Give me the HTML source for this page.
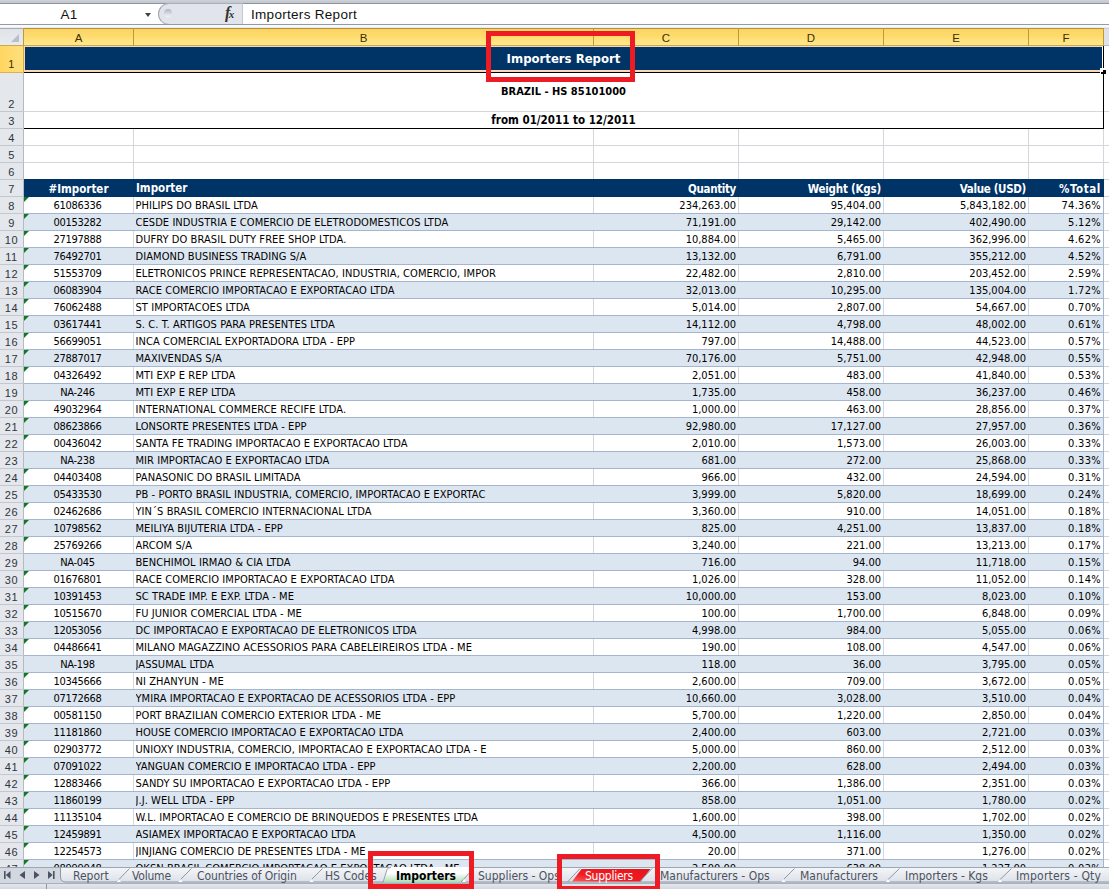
<!DOCTYPE html>
<html lang="en"><head><meta charset="utf-8"><title>Importers Report</title>
<style>
*{box-sizing:border-box;margin:0;padding:0}
html,body{width:1109px;height:889px;background:#fff;overflow:hidden}
body{font-family:"DejaVu Sans Condensed","DejaVu Sans","Liberation Sans",sans-serif;font-size:11px;color:#000}
#app{position:relative;width:1109px;height:889px;overflow:hidden;background:#fff}
#app div,#app span,#app i,#app svg{position:absolute}
/* top chrome */
.topstrip{left:0;top:0;width:1109px;height:4px;background:linear-gradient(#cfd3d9,#c0c5cc 74%,#8f959f 75%)}
.fbar{left:0;top:4px;width:1109px;height:20px;background:#fff}
.fline{left:0;top:24px;width:1109px;height:4px;background:linear-gradient(#959ba5 0,#959ba5 25%,#f4f5f7 26%,#fff 50%,#e3e6eb 100%)}
.namebox{left:0;top:4px;width:138px;height:20px;text-align:center;letter-spacing:0.3px;font:13.5px/21px "Liberation Sans",sans-serif;color:#111}
.ddarrow{left:145px;top:13px;width:0;height:0;border-left:3.5px solid transparent;border-right:3.5px solid transparent;border-top:4px solid #444}
.capsule{left:158px;top:3px;width:85px;height:22px;border:1px solid #9aa2ae;border-right:1px solid #c2c8d1;border-top-color:#a9b0ba;border-bottom-color:#b0b6bf;border-radius:11px 0 0 11px;background:#e1e5eb}
.knob{left:164px;top:9px;width:8px;height:8px;border-radius:50%;background:linear-gradient(#aeb5bf,#f4f6f8)}
.fx{left:225px;top:3px;width:16px;height:20px;font:italic bold 16px/20px "Liberation Serif",serif;color:#333;letter-spacing:-1.5px}
.fx small{font-size:11px;position:static}
.ftext{left:251px;top:4px;height:20px;letter-spacing:0.3px;font:13.5px/21px "Liberation Sans",sans-serif;color:#111;white-space:nowrap}
/* column headers */
.corner{left:0;top:28px;width:24px;height:18px;background:linear-gradient(#dfe3e8,#e8ebef);border-right:1px solid #bd9a3a;border-bottom:1px solid #c9a84e;border-top:1px solid #a8aeb8}
  .corner i{right:4px;bottom:3px;width:0;height:0;border-left:8px solid transparent;border-bottom:8px solid #b9bfc8}
.ch{top:28px;height:18px;border-top:1px solid #b49336;border-bottom:1px solid #c9a84e;border-right:1px solid #bf9b33;background:linear-gradient(#fbd364,#ffdc70 50%,#ffe98e);text-align:center;font:11.5px/18px "Liberation Sans",sans-serif;color:#3b3000}
.chg{left:1104px;top:28px;width:5px;height:18px;background:#dfe3e9;border-top:1px solid #c9ced6;border-bottom:1px solid #b7bdc6}
/* row headers */
.rh{left:0;width:24px;background:#e4e7ec;border-right:1px solid #b4bac4;text-align:center;font:11px "Liberation Sans",sans-serif;letter-spacing:0.6px;color:#2f3540;box-shadow:0 1px 0 #c3c8d0}
.rh.sel{background:linear-gradient(90deg,#ffd660,#ffdf7e);border-right:1px solid #d9a740;box-shadow:0 1px 0 #e2b04a;color:#3b3000}
/* grid */
#grid{left:0;top:0;width:1109px;height:867px;overflow:hidden}
.gl{background:#d5d6db}
.row{left:24px;width:1080px;height:17px;border-bottom:1px solid #a4b5cd;line-height:16px;white-space:nowrap;
 background:linear-gradient(90deg,transparent 109px,#d5d6db 109px,#d5d6db 110px,transparent 110px,transparent 569px,#d5d6db 569px,#d5d6db 570px,transparent 570px,transparent 714px,#d5d6db 714px,#d5d6db 715px,transparent 715px,transparent 859px,#d5d6db 859px,#d5d6db 860px,transparent 860px,transparent 1004px,#d5d6db 1004px,#d5d6db 1005px,transparent 1005px)}
.row.band{background:#dce6f1}
.row::after{content:"";position:absolute;right:0;top:0;width:1px;height:17px;background:#a4b5cd}
.c{top:1px;height:16px;line-height:16px;overflow:hidden}
.c.a{left:-1px;width:109px;text-align:center;letter-spacing:-0.3px}
.c.b{left:111.5px;width:457px;letter-spacing:0.07px}
.c.n{text-align:right}
.c.q{left:570px;width:142px}
.c.w{left:715px;width:142px}
.c.v{left:860px;width:142px}
.c.p{left:1005px;width:72px;letter-spacing:0.3px}
.tri{left:0;top:0;width:0;height:0;border-right:5px solid transparent;border-top:5px solid #0f7a1f}
.hd{left:24px;top:179px;width:1080px;height:18px;padding-top:2px;background:#003366;color:#fff;font-weight:bold;font-size:11.5px;line-height:16px;white-space:nowrap}
.title{left:25px;top:47px;width:1077px;height:23px;background:#003366;color:#fff;font-weight:bold;font-size:13px;line-height:23px;text-align:center}
.sub{left:24px;width:1079px;text-align:center;font-weight:bold;white-space:nowrap}
.redbox{border:5px solid #ed1c24}
.tab.act{font-weight:bold;color:#000}
.tab.red{color:#fff}
/* tab bar */
.tabbar{left:0;top:867px;width:1109px;height:16px;background:#d3d8e0;border-top:1px solid #9ea6b2}
.status{left:0;top:883px;width:1109px;height:6px;background:linear-gradient(#a9b0bb 0,#a9b0bb 17%,#e4e8ee 18%,#d3d8e0 100%)}
.tab{top:869px;height:15px;font:12px/14px "DejaVu Sans Condensed","Liberation Sans",sans-serif;color:#4a5361;white-space:nowrap}
.rgl{background:repeating-linear-gradient(#fff 0,#fff 16px,#d5d6db 16px,#d5d6db 17px)}

</style></head>
<body>
<div id="app">
<div class="topstrip"></div>
<div class="fbar"></div>
<div class="namebox">A1</div>
<div class="ddarrow"></div>
<div class="capsule"></div>
<div class="knob"></div>
<div class="fx">f<small>x</small></div>
<div class="ftext">Importers Report</div>
<div class="fline"></div>
<div class="corner"><i></i></div>
<div class="ch" style="left:24px;width:110px">A</div>
<div class="ch" style="left:134px;width:460px">B</div>
<div class="ch" style="left:594px;width:145px">C</div>
<div class="ch" style="left:739px;width:145px">D</div>
<div class="ch" style="left:884px;width:145px">E</div>
<div class="ch" style="left:1029px;width:75px">F</div>
<div class="chg"></div>
<div id="grid">
<!-- gridlines rows 2-6 and right of table -->
<div class="gl" style="left:24px;top:111px;width:1085px;height:1px"></div>
<div class="gl" style="left:24px;top:145px;width:1085px;height:1px"></div>
<div class="gl" style="left:24px;top:162px;width:1085px;height:1px"></div>
<div class="gl" style="left:24px;top:179px;width:1085px;height:1px"></div>
<div class="gl" style="left:133px;top:129px;width:1px;height:51px"></div>
<div class="gl" style="left:593px;top:129px;width:1px;height:51px"></div>
<div class="gl" style="left:738px;top:129px;width:1px;height:51px"></div>
<div class="gl" style="left:883px;top:129px;width:1px;height:51px"></div>
<div class="gl" style="left:1028px;top:129px;width:1px;height:51px"></div>
<div class="gl" style="left:1103px;top:129px;width:1px;height:51px"></div>
<div class="rgl" style="left:1104px;top:180px;width:5px;height:687px"></div>
<!-- row 1 title (selected cell) -->
<div style="left:24px;top:46px;width:1079px;height:26px;background:#fbd7b8"></div>
<div class="title">Importers Report</div>
<div style="left:24px;top:72px;width:1080px;height:1px;background:#000"></div>
<div style="left:1102px;top:46px;width:1px;height:26px;background:#fff"></div>
<div style="left:1103px;top:46px;width:1px;height:83px;background:#000"></div>
<div style="left:24px;top:128px;width:1080px;height:1px;background:#000"></div>
<div style="left:1100px;top:68px;width:6px;height:6px;background:#fff"></div>
<div style="left:1103px;top:70px;width:3px;height:4px;background:#000"></div>
<div style="left:1101px;top:72px;width:5px;height:2px;background:#000"></div>
<!-- rows 2,3 -->
<div class="sub" style="top:84px;height:16px;line-height:16px;font-size:11px">BRAZIL - HS 85101000</div>
<div class="sub" style="top:112px;height:16px;line-height:16px;font-size:11.5px">from 01/2011 to 12/2011</div>
<!-- row 7 header -->
<div class="hd">
<span style="left:0;top:2px;width:109px;text-align:center">#Importer</span>
<span style="left:112px;top:1px">Importer</span>
<span style="left:570px;top:2px;width:142px;text-align:right;letter-spacing:-0.35px">Quantity</span>
<span style="left:715px;top:2px;width:142px;text-align:right;letter-spacing:-0.22px">Weight (Kgs)</span>
<span style="left:860px;top:2px;width:142px;text-align:right;letter-spacing:-0.32px">Value (USD)</span>
<span style="left:1005px;top:2px;width:72px;text-align:right;letter-spacing:0.6px">%Total</span>
</div>
<div class="rh sel" style="top:46px;height:26px;line-height:36px">1</div>
<div class="rh" style="top:73px;height:38px;line-height:62px">2</div>
<div class="rh" style="top:112px;height:16px;line-height:19px">3</div>
<div class="rh" style="top:129px;height:16px;line-height:19px">4</div>
<div class="rh" style="top:146px;height:16px;line-height:19px">5</div>
<div class="rh" style="top:163px;height:16px;line-height:19px">6</div>
<div class="rh" style="top:180px;height:16px;line-height:19px">7</div>
<div class="rh" style="top:197px;height:16px;line-height:19px">8</div>
<div class="rh" style="top:214px;height:16px;line-height:19px">9</div>
<div class="rh" style="top:231px;height:16px;line-height:19px">10</div>
<div class="rh" style="top:248px;height:16px;line-height:19px">11</div>
<div class="rh" style="top:265px;height:16px;line-height:19px">12</div>
<div class="rh" style="top:282px;height:16px;line-height:19px">13</div>
<div class="rh" style="top:299px;height:16px;line-height:19px">14</div>
<div class="rh" style="top:316px;height:16px;line-height:19px">15</div>
<div class="rh" style="top:333px;height:16px;line-height:19px">16</div>
<div class="rh" style="top:350px;height:16px;line-height:19px">17</div>
<div class="rh" style="top:367px;height:16px;line-height:19px">18</div>
<div class="rh" style="top:384px;height:16px;line-height:19px">19</div>
<div class="rh" style="top:401px;height:16px;line-height:19px">20</div>
<div class="rh" style="top:418px;height:16px;line-height:19px">21</div>
<div class="rh" style="top:435px;height:16px;line-height:19px">22</div>
<div class="rh" style="top:452px;height:16px;line-height:19px">23</div>
<div class="rh" style="top:469px;height:16px;line-height:19px">24</div>
<div class="rh" style="top:486px;height:16px;line-height:19px">25</div>
<div class="rh" style="top:503px;height:16px;line-height:19px">26</div>
<div class="rh" style="top:520px;height:16px;line-height:19px">27</div>
<div class="rh" style="top:537px;height:16px;line-height:19px">28</div>
<div class="rh" style="top:554px;height:16px;line-height:19px">29</div>
<div class="rh" style="top:571px;height:16px;line-height:19px">30</div>
<div class="rh" style="top:588px;height:16px;line-height:19px">31</div>
<div class="rh" style="top:605px;height:16px;line-height:19px">32</div>
<div class="rh" style="top:622px;height:16px;line-height:19px">33</div>
<div class="rh" style="top:639px;height:16px;line-height:19px">34</div>
<div class="rh" style="top:656px;height:16px;line-height:19px">35</div>
<div class="rh" style="top:673px;height:16px;line-height:19px">36</div>
<div class="rh" style="top:690px;height:16px;line-height:19px">37</div>
<div class="rh" style="top:707px;height:16px;line-height:19px">38</div>
<div class="rh" style="top:724px;height:16px;line-height:19px">39</div>
<div class="rh" style="top:741px;height:16px;line-height:19px">40</div>
<div class="rh" style="top:758px;height:16px;line-height:19px">41</div>
<div class="rh" style="top:775px;height:16px;line-height:19px">42</div>
<div class="rh" style="top:792px;height:16px;line-height:19px">43</div>
<div class="rh" style="top:809px;height:16px;line-height:19px">44</div>
<div class="rh" style="top:826px;height:16px;line-height:19px">45</div>
<div class="rh" style="top:843px;height:16px;line-height:19px">46</div>
<div class="rh" style="top:860px;height:16px;line-height:19px">47</div>
<div class="row" style="top:197px"><i class="tri"></i><span class="c a">61086336</span><span class="c b">PHILIPS DO BRASIL LTDA</span><span class="c n q">234,263.00</span><span class="c n w">95,404.00</span><span class="c n v">5,843,182.00</span><span class="c n p">74.36%</span></div>
<div class="row band" style="top:214px"><i class="tri"></i><span class="c a">00153282</span><span class="c b">CESDE INDUSTRIA E COMERCIO DE ELETRODOMESTICOS LTDA</span><span class="c n q">71,191.00</span><span class="c n w">29,142.00</span><span class="c n v">402,490.00</span><span class="c n p">5.12%</span></div>
<div class="row" style="top:231px"><i class="tri"></i><span class="c a">27197888</span><span class="c b">DUFRY DO BRASIL DUTY FREE SHOP LTDA.</span><span class="c n q">10,884.00</span><span class="c n w">5,465.00</span><span class="c n v">362,996.00</span><span class="c n p">4.62%</span></div>
<div class="row band" style="top:248px"><i class="tri"></i><span class="c a">76492701</span><span class="c b">DIAMOND BUSINESS TRADING S/A</span><span class="c n q">13,132.00</span><span class="c n w">6,791.00</span><span class="c n v">355,212.00</span><span class="c n p">4.52%</span></div>
<div class="row" style="top:265px"><i class="tri"></i><span class="c a">51553709</span><span class="c b">ELETRONICOS PRINCE REPRESENTACAO, INDUSTRIA, COMERCIO, IMPOR</span><span class="c n q">22,482.00</span><span class="c n w">2,810.00</span><span class="c n v">203,452.00</span><span class="c n p">2.59%</span></div>
<div class="row band" style="top:282px"><i class="tri"></i><span class="c a">06083904</span><span class="c b">RACE COMERCIO IMPORTACAO E EXPORTACAO LTDA</span><span class="c n q">32,013.00</span><span class="c n w">10,295.00</span><span class="c n v">135,004.00</span><span class="c n p">1.72%</span></div>
<div class="row" style="top:299px"><i class="tri"></i><span class="c a">76062488</span><span class="c b">ST IMPORTACOES LTDA</span><span class="c n q">5,014.00</span><span class="c n w">2,807.00</span><span class="c n v">54,667.00</span><span class="c n p">0.70%</span></div>
<div class="row band" style="top:316px"><i class="tri"></i><span class="c a">03617441</span><span class="c b">S. C. T. ARTIGOS PARA PRESENTES LTDA</span><span class="c n q">14,112.00</span><span class="c n w">4,798.00</span><span class="c n v">48,002.00</span><span class="c n p">0.61%</span></div>
<div class="row" style="top:333px"><i class="tri"></i><span class="c a">56699051</span><span class="c b">INCA COMERCIAL EXPORTADORA LTDA - EPP</span><span class="c n q">797.00</span><span class="c n w">14,488.00</span><span class="c n v">44,523.00</span><span class="c n p">0.57%</span></div>
<div class="row band" style="top:350px"><i class="tri"></i><span class="c a">27887017</span><span class="c b">MAXIVENDAS S/A</span><span class="c n q">70,176.00</span><span class="c n w">5,751.00</span><span class="c n v">42,948.00</span><span class="c n p">0.55%</span></div>
<div class="row" style="top:367px"><i class="tri"></i><span class="c a">04326492</span><span class="c b">MTI EXP E REP LTDA</span><span class="c n q">2,051.00</span><span class="c n w">483.00</span><span class="c n v">41,840.00</span><span class="c n p">0.53%</span></div>
<div class="row band" style="top:384px"><span class="c a">NA-246</span><span class="c b">MTI EXP E REP LTDA</span><span class="c n q">1,735.00</span><span class="c n w">458.00</span><span class="c n v">36,237.00</span><span class="c n p">0.46%</span></div>
<div class="row" style="top:401px"><i class="tri"></i><span class="c a">49032964</span><span class="c b">INTERNATIONAL COMMERCE RECIFE LTDA.</span><span class="c n q">1,000.00</span><span class="c n w">463.00</span><span class="c n v">28,856.00</span><span class="c n p">0.37%</span></div>
<div class="row band" style="top:418px"><i class="tri"></i><span class="c a">08623866</span><span class="c b">LONSORTE PRESENTES LTDA - EPP</span><span class="c n q">92,980.00</span><span class="c n w">17,127.00</span><span class="c n v">27,957.00</span><span class="c n p">0.36%</span></div>
<div class="row" style="top:435px"><i class="tri"></i><span class="c a">00436042</span><span class="c b">SANTA FE TRADING IMPORTACAO E EXPORTACAO LTDA</span><span class="c n q">2,010.00</span><span class="c n w">1,573.00</span><span class="c n v">26,003.00</span><span class="c n p">0.33%</span></div>
<div class="row band" style="top:452px"><span class="c a">NA-238</span><span class="c b">MIR IMPORTACAO E EXPORTACAO LTDA</span><span class="c n q">681.00</span><span class="c n w">272.00</span><span class="c n v">25,868.00</span><span class="c n p">0.33%</span></div>
<div class="row" style="top:469px"><i class="tri"></i><span class="c a">04403408</span><span class="c b">PANASONIC DO BRASIL LIMITADA</span><span class="c n q">966.00</span><span class="c n w">432.00</span><span class="c n v">24,594.00</span><span class="c n p">0.31%</span></div>
<div class="row band" style="top:486px"><i class="tri"></i><span class="c a">05433530</span><span class="c b">PB - PORTO BRASIL INDUSTRIA, COMERCIO, IMPORTACAO E EXPORTAC</span><span class="c n q">3,999.00</span><span class="c n w">5,820.00</span><span class="c n v">18,699.00</span><span class="c n p">0.24%</span></div>
<div class="row" style="top:503px"><i class="tri"></i><span class="c a">02462686</span><span class="c b">YIN´S BRASIL COMERCIO INTERNACIONAL LTDA</span><span class="c n q">3,360.00</span><span class="c n w">910.00</span><span class="c n v">14,051.00</span><span class="c n p">0.18%</span></div>
<div class="row band" style="top:520px"><i class="tri"></i><span class="c a">10798562</span><span class="c b">MEILIYA BIJUTERIA LTDA - EPP</span><span class="c n q">825.00</span><span class="c n w">4,251.00</span><span class="c n v">13,837.00</span><span class="c n p">0.18%</span></div>
<div class="row" style="top:537px"><i class="tri"></i><span class="c a">25769266</span><span class="c b">ARCOM S/A</span><span class="c n q">3,240.00</span><span class="c n w">221.00</span><span class="c n v">13,213.00</span><span class="c n p">0.17%</span></div>
<div class="row band" style="top:554px"><span class="c a">NA-045</span><span class="c b">BENCHIMOL IRMAO &amp; CIA LTDA</span><span class="c n q">716.00</span><span class="c n w">94.00</span><span class="c n v">11,718.00</span><span class="c n p">0.15%</span></div>
<div class="row" style="top:571px"><i class="tri"></i><span class="c a">01676801</span><span class="c b">RACE COMERCIO IMPORTACAO E EXPORTACAO LTDA</span><span class="c n q">1,026.00</span><span class="c n w">328.00</span><span class="c n v">11,052.00</span><span class="c n p">0.14%</span></div>
<div class="row band" style="top:588px"><i class="tri"></i><span class="c a">10391453</span><span class="c b">SC TRADE IMP. E EXP. LTDA - ME</span><span class="c n q">10,000.00</span><span class="c n w">153.00</span><span class="c n v">8,023.00</span><span class="c n p">0.10%</span></div>
<div class="row" style="top:605px"><i class="tri"></i><span class="c a">10515670</span><span class="c b">FU JUNIOR COMERCIAL LTDA - ME</span><span class="c n q">100.00</span><span class="c n w">1,700.00</span><span class="c n v">6,848.00</span><span class="c n p">0.09%</span></div>
<div class="row band" style="top:622px"><i class="tri"></i><span class="c a">12053056</span><span class="c b">DC IMPORTACAO E EXPORTACAO DE ELETRONICOS LTDA</span><span class="c n q">4,998.00</span><span class="c n w">984.00</span><span class="c n v">5,055.00</span><span class="c n p">0.06%</span></div>
<div class="row" style="top:639px"><i class="tri"></i><span class="c a">04486641</span><span class="c b">MILANO MAGAZZINO ACESSORIOS PARA CABELEIREIROS LTDA - ME</span><span class="c n q">190.00</span><span class="c n w">108.00</span><span class="c n v">4,547.00</span><span class="c n p">0.06%</span></div>
<div class="row band" style="top:656px"><span class="c a">NA-198</span><span class="c b">JASSUMAL LTDA</span><span class="c n q">118.00</span><span class="c n w">36.00</span><span class="c n v">3,795.00</span><span class="c n p">0.05%</span></div>
<div class="row" style="top:673px"><i class="tri"></i><span class="c a">10345666</span><span class="c b">NI ZHANYUN - ME</span><span class="c n q">2,600.00</span><span class="c n w">709.00</span><span class="c n v">3,672.00</span><span class="c n p">0.05%</span></div>
<div class="row band" style="top:690px"><i class="tri"></i><span class="c a">07172668</span><span class="c b">YMIRA IMPORTACAO E EXPORTACAO DE ACESSORIOS LTDA - EPP</span><span class="c n q">10,660.00</span><span class="c n w">3,028.00</span><span class="c n v">3,510.00</span><span class="c n p">0.04%</span></div>
<div class="row" style="top:707px"><i class="tri"></i><span class="c a">00581150</span><span class="c b">PORT BRAZILIAN COMERCIO EXTERIOR LTDA - ME</span><span class="c n q">5,700.00</span><span class="c n w">1,220.00</span><span class="c n v">2,850.00</span><span class="c n p">0.04%</span></div>
<div class="row band" style="top:724px"><i class="tri"></i><span class="c a">11181860</span><span class="c b">HOUSE COMERCIO IMPORTACAO E EXPORTACAO LTDA</span><span class="c n q">2,400.00</span><span class="c n w">603.00</span><span class="c n v">2,721.00</span><span class="c n p">0.03%</span></div>
<div class="row" style="top:741px"><i class="tri"></i><span class="c a">02903772</span><span class="c b">UNIOXY INDUSTRIA, COMERCIO, IMPORTACAO E EXPORTACAO LTDA - E</span><span class="c n q">5,000.00</span><span class="c n w">860.00</span><span class="c n v">2,512.00</span><span class="c n p">0.03%</span></div>
<div class="row band" style="top:758px"><i class="tri"></i><span class="c a">07091022</span><span class="c b">YANGUAN COMERCIO E IMPORTACAO LTDA - EPP</span><span class="c n q">2,200.00</span><span class="c n w">628.00</span><span class="c n v">2,494.00</span><span class="c n p">0.03%</span></div>
<div class="row" style="top:775px"><i class="tri"></i><span class="c a">12883466</span><span class="c b">SANDY SU IMPORTACAO E EXPORTACAO LTDA - EPP</span><span class="c n q">366.00</span><span class="c n w">1,386.00</span><span class="c n v">2,351.00</span><span class="c n p">0.03%</span></div>
<div class="row band" style="top:792px"><i class="tri"></i><span class="c a">11860199</span><span class="c b">J.J. WELL LTDA - EPP</span><span class="c n q">858.00</span><span class="c n w">1,051.00</span><span class="c n v">1,780.00</span><span class="c n p">0.02%</span></div>
<div class="row" style="top:809px"><i class="tri"></i><span class="c a">11135104</span><span class="c b">W.L. IMPORTACAO E COMERCIO DE BRINQUEDOS E PRESENTES LTDA</span><span class="c n q">1,600.00</span><span class="c n w">398.00</span><span class="c n v">1,702.00</span><span class="c n p">0.02%</span></div>
<div class="row band" style="top:826px"><i class="tri"></i><span class="c a">12459891</span><span class="c b">ASIAMEX IMPORTACAO E EXPORTACAO LTDA</span><span class="c n q">4,500.00</span><span class="c n w">1,116.00</span><span class="c n v">1,350.00</span><span class="c n p">0.02%</span></div>
<div class="row" style="top:843px"><i class="tri"></i><span class="c a">12254573</span><span class="c b">JINJIANG COMERCIO DE PRESENTES LTDA - ME</span><span class="c n q">20.00</span><span class="c n w">371.00</span><span class="c n v">1,276.00</span><span class="c n p">0.02%</span></div>
<div class="row band" style="top:860px"><i class="tri"></i><span class="c a">08999048</span><span class="c b">OKSN BRASIL COMERCIO IMPORTACAO E EXPORTACAO LTDA - ME</span><span class="c n q">2,500.00</span><span class="c n w">638.00</span><span class="c n v">1,227.00</span><span class="c n p">0.02%</span></div>
</div>
<div class="tabbar"></div>
<div class="status"><i style="left:46px;top:1px;width:1px;height:5px;background:#8f97a3"></i></div>
<svg class="tabsvg" style="left:0;top:867px" width="1109" height="22" viewBox="0 0 1109 22">
<defs>
<linearGradient id="tg" x1="0" y1="0" x2="0" y2="1"><stop offset="0" stop-color="#f3f5f8"/><stop offset="1" stop-color="#dde1e8"/></linearGradient>
<linearGradient id="ag" x1="0" y1="0" x2="0" y2="1"><stop offset="0" stop-color="#ffffff"/><stop offset="0.4" stop-color="#ffffff"/><stop offset="1" stop-color="#aadcb4"/></linearGradient>
<linearGradient id="rg" x1="0" y1="1" x2="1" y2="0"><stop offset="0" stop-color="#ff5a5a"/><stop offset="0.35" stop-color="#ef1c24"/><stop offset="1" stop-color="#e8141c"/></linearGradient>
</defs>
<!-- nav arrows -->
<g fill="#4a5361">
<rect x="4" y="4" width="1.6" height="8"/><path d="M10.5 4 L10.5 12 L5.8 8 Z"/>
<path d="M25 4 L25 12 L19.5 8 Z"/>
<path d="M34 4 L34 12 L39.5 8 Z"/>
<path d="M48 4 L48 12 L52.7 8 Z"/><rect x="53" y="4" width="1.6" height="8"/>
</g>
<!-- inactive tabs background -->
<path d="M60.5 1 L1109 1 L1109 15 L66 15 Q60.5 15 60.5 10 Z" fill="url(#tg)"/>
<path d="M60.5 1 L60.5 10 Q60.5 15 66 15 L1109 15" fill="none" stroke="#8e97a5" stroke-width="1"/>
<!-- dividers -->
<g stroke="#8e97a5" stroke-width="1" fill="none">
<path d="M116.5 15 L129.5 1.5"/>
<path d="M178 15 L191.5 1.5"/>
<path d="M309 15 L322.5 1.5"/>
<path d="M781 15 L794.5 1.5"/>
<path d="M885.5 15 L899.5 1.5"/>
<path d="M997.5 15 L1011.5 1.5"/>
</g>
<g fill="#fff"><path d="M116.5 15 l4.5 0 l-2 -3z"/><path d="M178 15 l4.5 0 l-2 -3z"/><path d="M309 15 l4.5 0 l-2 -3z"/><path d="M781 15 l4.5 0 l-2 -3z"/><path d="M885.5 15 l4.5 0 l-2 -3z"/><path d="M997.5 15 l4.5 0 l-2 -3z"/></g>
<!-- red tab -->
<path d="M572 14.5 L581.5 2 L650.5 2 L640.5 14.5 Z" fill="url(#rg)"/>
<path d="M567.5 15 L580 1.5 M639.5 15 L652 1.5" stroke="#8e97a5" stroke-width="1" fill="none"/>
<!-- active tab -->
<path d="M383 15.5 L387 2.5 Q388 0 391 0 L474 0 L462 15.5 Z" fill="url(#ag)"/>
<path d="M383 15.5 L387 2.5 Q388 0.5 391 0.5" stroke="#9aa2ae" stroke-width="1" fill="none"/>
<path d="M461 15 L474 1" stroke="#8e97a5" stroke-width="1" fill="none"/>
<path d="M462 15 l4 0 l-2 -3z" fill="#fff"/>
</svg>
<div class="tab" style="left:73px">Report</div>
<div class="tab" style="left:132px;letter-spacing:-0.2px">Volume</div>
<div class="tab" style="left:197px;letter-spacing:-0.1px">Countries of Origin</div>
<div class="tab" style="left:325px">HS Codes</div>
<div class="tab act" style="left:396px">Importers</div>
<div class="tab" style="left:478px">Suppliers - Ops</div>
<div class="tab red" style="left:585px;letter-spacing:-0.25px">Suppliers</div>
<div class="tab" style="left:660px">Manufacturers - Ops</div>
<div class="tab" style="left:800px">Manufacturers</div>
<div class="tab" style="left:905px">Importers - Kgs</div>
<div class="tab" style="left:1016px;letter-spacing:0.18px">Importers - Qty</div>
<!-- red annotation boxes -->
<div class="redbox" style="left:486px;top:31px;width:149px;height:51px"></div>
<div class="redbox" style="left:368px;top:851px;width:106px;height:38px"></div>
<div class="redbox" style="left:557px;top:854px;width:103px;height:37px"></div>
</div>
</body></html>
